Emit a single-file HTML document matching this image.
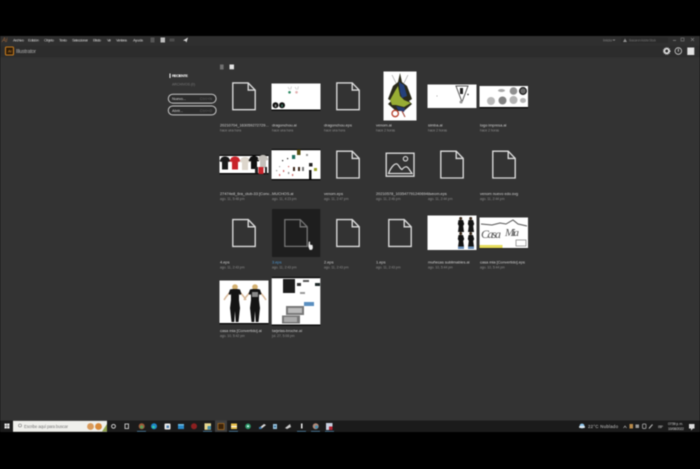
<!DOCTYPE html>
<html lang="es"><head><meta charset="utf-8"><title>Illustrator</title>
<style>
html,body{margin:0;padding:0;background:#000;width:700px;height:469px;overflow:hidden}
svg{display:block;filter:blur(.45px)}
text{font-family:"Liberation Sans",sans-serif}
.m{font-size:4px;fill:#d0d0d0}
.l{font-size:3.9px;fill:#d6d6d6}
.s{font-size:3.3px;fill:#909090}
.d{fill:none;stroke:#dcdcdc;stroke-width:1.35}
</style></head><body>
<svg width="700" height="469" viewBox="0 0 700 469" xmlns="http://www.w3.org/2000/svg">
<defs>
<g id="doc"><path class="d" d="M-11.2-13.4H4.2L11.2-6.2V13.4H-11.2Z"/><path class="d" d="M4.2-13.4V-6.2H11.2"/></g>
<g id="doch"><path fill="none" stroke="#757575" stroke-width="1.3" d="M-11.2-13.4H4.2L11.2-6.2V13.4H-11.2Z"/><path fill="none" stroke="#757575" stroke-width="1.3" d="M4.2-13.4V-6.2H11.2"/></g>
<g id="shirt"><path d="M-3.5-6L-1.2-7H1.2L3.5-6L5.5-2.5L3.5-1.300L3-2.500V6H-3V-2.500L-3.500-1.300L-5.500-2.500Z"/></g>
<g id="w"><path d="M-4-8L-9-2L-11 1M4-8L9-2L11 1" fill="none" stroke="#d8b898" stroke-width="1.500"/><circle cx="0" cy="-12" r="2.800" fill="#d4b070"/><path d="M-5-9.500L-2.500-10H2.500L5-9.500L6.500-5L4.500-4L4-5.500V1L5 9L3.500 23H.7L0 12L-.7 23H-3.500L-5 9L-4 1V-5.500L-4.500-4L-6.500-5Z" fill="#141414"/></g>
</defs>

<rect width="700" height="469" fill="#000"/>
<rect y="36" width="700" height="385" fill="#333"/>
<rect y="36" width="700" height="10" fill="#2f2f2f"/>
<rect y="46" width="700" height="11.500" fill="#2c2c2c"/>

<!-- menu -->
<text x="2" y="42" font-size="6" fill="#a3683a" font-style="italic">Ai</text>
<text class="m" x="13" y="41.500" textLength="11">Archivo</text>
<text class="m" x="28" y="41.500" textLength="11">Edición</text>
<text class="m" x="44" y="41.500" textLength="10">Objeto</text>
<text class="m" x="59" y="41.500" textLength="8">Texto</text>
<text class="m" x="72" y="41.500" textLength="16">Seleccionar</text>
<text class="m" x="93" y="41.500" textLength="8">Efecto</text>
<text class="m" x="107" y="41.500" textLength="4">Ver</text>
<text class="m" x="116" y="41.500" textLength="11">Ventana</text>
<text class="m" x="133" y="41.500" textLength="10">Ayuda</text>
<rect x="150.500" y="37.500" width="4" height="5" fill="#555"/>
<rect x="160.500" y="37.500" width="4.500" height="5" fill="#bdbdbd"/>
<rect x="169.500" y="38.500" width="5" height="3" fill="#4c4c4c"/>
<path d="M183 40.500L188 37.500L186.500 42.500L185.500 41Z" fill="#d8d8d8"/>
<text x="603" y="41.500" font-size="3.800" fill="#8d8d8d" textLength="9">Inicio</text>
<path d="M612.500 39.500l1.500 1.500 1.500-1.500z" fill="#888"/>
<rect x="621" y="37.500" width="47" height="5.500" fill="#2a2a2a"/>
<path d="M623 42l2-3.500 2 3.500z" fill="#909090"/>
<text x="629" y="41.500" font-size="3.200" fill="#6f6f6f" textLength="27">Buscar en Adobe Stock</text>
<rect x="673" y="40" width="3" height=".8" fill="#808080"/>
<rect x="681" y="38" width="3" height="3" fill="none" stroke="#808080" stroke-width=".6"/>
<path d="M691 38l3 3m0-3l-3 3" stroke="#808080" stroke-width=".6"/>

<!-- title row -->
<rect x="5.500" y="47" width="8" height="8" rx="1" fill="#2e1c08" stroke="#c47a1e" stroke-width="1.100"/>
<text x="8" y="52.500" font-size="4" fill="#d58a2c">Ai</text>
<text x="16" y="53" font-size="5.200" fill="#b0b0b0" textLength="20">Illustrator</text>
<circle cx="666.700" cy="51" r="2.200" fill="none" stroke="#e4e4e4" stroke-width="1.500"/>
<circle cx="666.700" cy="51" r="3.300" fill="none" stroke="#e4e4e4" stroke-width=".9" stroke-dasharray="1 .8"/>
<circle cx="678.300" cy="51" r="3.300" fill="none" stroke="#d0d0d0" stroke-width=".8"/>
<rect x="677.900" y="48.800" width=".9" height="3" fill="#d0d0d0"/>
<rect x="687.300" y="47.500" width="7" height="7.500" fill="#e2e2e2"/>

<!-- sidebar -->
<rect x="169.500" y="73.500" width="1" height="4.500" fill="#fff"/>
<text x="172" y="77" font-size="3.700" font-weight="bold" fill="#fff" textLength="16">RECIENTE</text>
<text x="172" y="85.500" font-size="3.500" fill="#7a7a7a" textLength="23">ARCHIVOS (0)</text>
<rect x="168.300" y="94.200" width="47.800" height="8.900" rx="4.400" fill="#2c2c2c" stroke="#c8c8c8" stroke-width="1"/>
<rect x="168.300" y="106" width="47.800" height="8.900" rx="4.400" fill="#2c2c2c" stroke="#c8c8c8" stroke-width="1"/>
<text x="172" y="100" font-size="3.900" fill="#d8d8d8" textLength="14">Nuevo...</text>
<text x="172" y="111.800" font-size="3.900" fill="#d8d8d8" textLength="11">Abrir...</text>
<text x="200" y="100" font-size="3.400" fill="#6a6a6a" textLength="12">Ctrl+N</text>
<text x="200" y="111.800" font-size="3.400" fill="#6a6a6a" textLength="12">Ctrl+O</text>

<!-- view toggles -->
<rect x="220" y="64.500" width="3.600" height="5" fill="#717171"/>
<rect x="229.500" y="64.500" width="4.500" height="4.800" fill="#e4e4e4"/>

<!-- row 1 -->
<use href="#doc" x="244" y="96.300"/>
<rect x="271.500" y="83.500" width="49" height="26.500" fill="#fff"/>
<rect x="271.500" y="109.500" width="49" height="1.200" fill="#000"/>
<circle cx="275.500" cy="105.300" r="3" fill="#111"/><circle cx="282" cy="105.300" r="3" fill="#111"/>
<rect x="274.800" y="104.500" width="1.500" height="2.500" fill="#888"/><rect x="281.300" y="104.500" width="1.500" height="2.500" fill="#3e7d68"/>
<circle cx="289.500" cy="92.300" r="1.300" fill="#2d8a63"/><circle cx="296.500" cy="92.300" r="1.300" fill="#e3b0b0"/>
<path d="M288 87l1.500 2.500M291.500 86.500l-1 3M295 87l1.500 2.500M298.500 86.500l-1 3" stroke="#bbb" stroke-width=".6"/>
<use href="#doc" x="348" y="96.300"/>
<rect x="383.500" y="71.500" width="33" height="49" fill="#fff"/>
<path d="M400 73L398 82L393 86L388 99L391 101L388 104L396 111H404L412 104L409 101L412 99L407 86L402 82Z" fill="#2a2a1a"/>
<path d="M390 100L395 91L398 86L400 96L404 100L411 103L404 107L396 105L392 105Z" fill="#98ad34"/>
<path d="M399 82L404 85L407 96L402 98L400 92Z" fill="#24407a"/>
<path d="M396 106L405 108L404 112L398 110Z" fill="#263a70"/>
<path d="M392 113.500a3.200 3.200 0 1 0 6.400 0a3.200 3.200 0 1 0-6.400 0" fill="none" stroke="#b6402c" stroke-width="1.300"/>
<path d="M402 111l3 6" stroke="#9c3a2c" stroke-width="1"/>
<path d="M392 75L396 83M408 75L404 83" stroke="#777" stroke-width=".5"/>
<rect x="427.500" y="84.500" width="49" height="23.500" fill="#fff"/>
<path d="M456 86H468L462 102Z" fill="none" stroke="#555" stroke-width="1"/>
<rect x="460" y="88" width="3" height="6" fill="#222"/>
<circle cx="461" cy="102" r="1.500" fill="#999"/><circle cx="468" cy="94.500" r=".7" fill="#222"/><circle cx="437" cy="96" r=".5" fill="#888"/>
<rect x="479.500" y="86" width="48.500" height="21.500" fill="#fff"/>
<rect x="479.500" y="107" width="48.500" height="1.200" fill="#000"/>
<circle cx="491" cy="101" r="4" fill="#b8b8b8"/><circle cx="502.500" cy="100.500" r="4" fill="#808080"/><circle cx="513.500" cy="100" r="4" fill="#b4b4b4"/>
<circle cx="513.500" cy="91" r="3.800" fill="#909090"/><circle cx="523" cy="91" r="3.400" fill="#666" stroke="#111" stroke-width="1.100"/><ellipse cx="523" cy="100.500" rx="3" ry="2.500" fill="#b4b4b4"/>
<ellipse cx="501.500" cy="90.500" rx="3.500" ry="1.500" fill="#a8a8a8"/>
<g>
<text class="l" x="220" y="126.500">20210704_163059272729...</text><text class="s" x="220" y="131.500">hace una hora</text>
<text class="l" x="272" y="126.500">dragonchou.ai</text><text class="s" x="272" y="131.500">hace una hora</text>
<text class="l" x="324" y="126.500">dragonchou.eps</text><text class="s" x="324" y="131.500">hace una hora</text>
<text class="l" x="376" y="126.500">venom.ai</text><text class="s" x="376" y="131.500">hace 2 horas</text>
<text class="l" x="428" y="126.500">simba.ai</text><text class="s" x="428" y="131.500">hace 2 horas</text>
<text class="l" x="480" y="126.500">logo impresa.ai</text><text class="s" x="480" y="131.500">hace 2 horas</text>
</g>

<!-- row 2 -->
<rect x="219.500" y="155.500" width="49" height="17.500" fill="#fff"/>
<rect x="219.500" y="155" width="49" height="1" fill="#000"/><rect x="219.500" y="173" width="49" height="1.200" fill="#000"/>
<use href="#shirt" x="225" y="163.500" fill="#1a1a1a"/><use href="#shirt" x="235" y="163.500" fill="#c8232a"/><use href="#shirt" x="245" y="164" fill="#ddd6cc"/><use href="#shirt" x="254" y="163" fill="#111"/><use href="#shirt" x="263" y="162" fill="#c4c0ba"/>
<rect x="255" y="167" width="3" height="6.500" fill="#222"/><rect x="258.500" y="167" width="5" height="7" fill="#c8232a"/><rect x="265" y="167" width="2" height="7" fill="#222"/>
<rect x="271.500" y="149.500" width="49" height="30" fill="#fff"/>
<rect x="271.500" y="149" width="49" height="1.200" fill="#000"/><rect x="271.500" y="179" width="49" height="1.200" fill="#000"/>
<rect x="297" y="149.500" width="3.500" height="5.500" fill="#554c10"/><rect x="292" y="155" width="3.200" height="4" fill="#1d6e5e"/>
<rect x="309" y="170" width="2.500" height="9" fill="#111"/><rect x="309" y="163" width="3.500" height="3.500" fill="#222"/>
<rect x="293" y="167" width="2" height="4" fill="#3a2418"/><rect x="298" y="167" width="2" height="4" fill="#3a2418"/><rect x="302" y="167" width="2" height="4" fill="#777"/>
<rect x="314" y="168" width="3" height="3" fill="#9aa02a"/>
<rect x="282" y="160" width="1.200" height="1.200" fill="#222"/><rect x="287" y="158" width="1.200" height="1.200" fill="#222"/><rect x="283" y="170" width="1.200" height="2" fill="#c66"/><rect x="279" y="174" width="1.200" height="2" fill="#c66"/><rect x="288" y="172" width="1.200" height="2" fill="#888"/><rect x="292" y="174" width="1.200" height="2" fill="#c66"/><rect x="276" y="170" width="1.200" height="1.200" fill="#999"/><rect x="288" y="166" width="1.200" height="1.200" fill="#c66"/><rect x="306" y="154" width="2" height="2" fill="#999"/><rect x="279" y="166" width="1.200" height="1.200" fill="#aaa"/>
<use href="#doc" x="348" y="164.600"/>
<rect x="386.200" y="153.200" width="27.800" height="23" fill="none" stroke="#dcdcdc" stroke-width="1.350"/>
<circle cx="405.500" cy="158.800" r="2.200" fill="none" stroke="#dcdcdc" stroke-width="1.100"/>
<path d="M388.500 173.500C390 169 394 163 397 164C399 165 400 169 402 169.500C405 166 407 166 409 169L412 173.500Z" fill="none" stroke="#dcdcdc" stroke-width="1.250"/>
<use href="#doc" x="452" y="164.600"/>
<use href="#doc" x="504" y="164.600"/>
<g>
<text class="l" x="220" y="195">27474e8_6ra_club-33 [Conv...</text><text class="s" x="220" y="200">ago. 11, 5:48 pm</text>
<text class="l" x="272" y="195">MUCHOS.ai</text><text class="s" x="272" y="200">ago. 11, 4:23 pm</text>
<text class="l" x="324" y="195">venom.eps</text><text class="s" x="324" y="200">ago. 11, 2:47 pm</text>
<text class="l" x="376" y="195">20210578_103547791240694...</text><text class="s" x="376" y="200">ago. 11, 2:46 pm</text>
<text class="l" x="428" y="195">tiveom.eps</text><text class="s" x="428" y="200">ago. 11, 2:44 pm</text>
<text class="l" x="480" y="195">venom nuevo edo.svg</text><text class="s" x="480" y="200">ago. 11, 2:44 pm</text>
</g>

<!-- row 3 -->
<use href="#doc" x="244" y="233"/>
<rect x="272" y="209" width="48.300" height="48" fill="#1e1e1e"/>
<use href="#doch" x="296" y="233"/>
<path d="M308.700 241.500h1.500v3l2.500.5.300 3-1 2h-2.500l-1.300-3.500z" fill="#ececec" stroke="#222" stroke-width=".3"/>
<use href="#doc" x="348" y="233"/>
<use href="#doc" x="400" y="233"/>
<rect x="427.500" y="215.500" width="49" height="34.500" fill="#fff"/>
<g fill="#141414">
<path d="M458.500 220h4.500l1.200 4-1 2 .8 6h-6l.8-6-1-2z"/><path d="M468.500 220h4.500l1.200 4-1 2 .8 6h-6l.8-6-1-2z"/>
<path d="M458.500 235h4.500l1.200 4-1 2 .8 6h-6l.8-6-1-2z"/><path d="M468.500 235h4.500l1.200 4-1 2 .8 6h-6l.8-6-1-2z"/>
</g>
<circle cx="460.700" cy="218.500" r="1.500" fill="#3a2a1a"/><circle cx="470.700" cy="218.500" r="1.500" fill="#3a2a1a"/><circle cx="460.700" cy="233.500" r="1.500" fill="#3a2a1a"/><circle cx="470.700" cy="233.500" r="1.500" fill="#3a2a1a"/>
<rect x="458" y="246.500" width="6" height="2.500" fill="#6a8fb8"/><rect x="468" y="246.500" width="6" height="2.500" fill="#6a8fb8"/>
<rect x="479.500" y="217.500" width="48.500" height="30.500" fill="#fff"/>
<rect x="479.500" y="248" width="48.500" height="1" fill="#222"/>
<path d="M481 224L492 225L500 223L506 224L513 220L518 224L527 226" fill="none" stroke="#555" stroke-width="1"/>
<text x="481" y="238" font-style="italic" font-size="12" fill="#555" textLength="20" style="font-family:'Liberation Serif',serif">Casa</text>
<text x="505" y="236" font-size="11" font-style="italic" fill="#555" textLength="14" style="font-family:'Liberation Serif',serif">Mia</text>
<rect x="479.500" y="245" width="23" height="3" fill="#e6dc5a"/>
<rect x="516" y="240" width="10" height="6" fill="#fff" stroke="#666" stroke-width=".6"/>
<g>
<text class="l" x="220" y="263.500">4.eps</text><text class="s" x="220" y="268.500">ago. 11, 2:43 pm</text>
<text class="l" x="272" y="263.500" style="fill:#4d9ad8">3.eps</text><text class="s" x="272" y="268.500">ago. 11, 2:43 pm</text>
<text class="l" x="324" y="263.500">2.eps</text><text class="s" x="324" y="268.500">ago. 11, 2:43 pm</text>
<text class="l" x="376" y="263.500">1.eps</text><text class="s" x="376" y="268.500">ago. 11, 2:43 pm</text>
<text class="l" x="428" y="263.500">muñecas sublimables.ai</text><text class="s" x="428" y="268.500">ago. 10, 5:44 pm</text>
<text class="l" x="480" y="263.500">casa mia [Convertido].eps</text><text class="s" x="480" y="268.500">ago. 10, 5:44 pm</text>
</g>

<!-- row 4 -->
<rect x="219.500" y="280.500" width="49" height="42.500" fill="#fff"/>
<rect x="219.500" y="323" width="49" height="1.200" fill="#000"/>
<use href="#w" x="235" y="299"/><use href="#w" x="255" y="299"/>
<rect x="252" y="292" width="6" height="5" fill="#888"/>
<rect x="271.700" y="277.500" width="48.600" height="47" fill="#fff"/>
<rect x="271.700" y="277" width="48.600" height="1.200" fill="#000"/><rect x="271.700" y="324.500" width="48.600" height="1.200" fill="#000"/>
<rect x="283" y="279" width="12" height="14" fill="#1d1d1d"/>
<rect x="297" y="283" width="4" height="3" fill="#333"/><rect x="303" y="280" width="6" height="2" fill="#555"/><rect x="315" y="283" width="5" height="3" fill="#1f2a2a"/>
<rect x="300" y="292" width="5" height="2" fill="#999"/><rect x="304" y="302" width="10" height="4" fill="#5a8fc0"/>
<rect x="286" y="306" width="18" height="9" fill="#777"/><rect x="288" y="308" width="14" height="5" fill="#bbb"/>
<rect x="282" y="315.500" width="18" height="8" fill="#777"/><rect x="284" y="317" width="13" height="5" fill="#aaa"/>
<text class="l" x="220" y="332">casa mia [Convertido].ai</text><text class="s" x="220" y="337">ago. 10, 5:42 pm</text>
<text class="l" x="272" y="332">tarjetas-broche.ai</text><text class="s" x="272" y="337">jul. 27, 5:08 pm</text>

<!-- taskbar -->
<rect y="420.500" width="700" height="11.500" fill="#1b1b1b"/>
<g fill="#eee"><rect x="4.500" y="423.500" width="2.300" height="2.300"/><rect x="7.200" y="423.500" width="2.300" height="2.300"/><rect x="4.500" y="426.200" width="2.300" height="2.300"/><rect x="7.200" y="426.200" width="2.300" height="2.300"/></g>
<rect x="13" y="420.800" width="94" height="11" fill="#f0f0ec"/>
<circle cx="20" cy="425.500" r="1.500" fill="none" stroke="#777" stroke-width=".6"/>
<text x="24" y="428" font-size="4.300" fill="#777" textLength="44">Escribe aquí para buscar</text>
<circle cx="90.500" cy="426.500" r="3.400" fill="#d99a5a"/><circle cx="98.500" cy="426.500" r="3.400" fill="#d98a3a"/><path d="M102 431.500L107 424V431.500Z" fill="#8fa24a"/>
<circle cx="113.500" cy="426.300" r="1.900" fill="none" stroke="#ddd" stroke-width=".9"/>
<rect x="125" y="424" width="3.500" height="4.500" fill="none" stroke="#ccc" stroke-width=".9"/>
<circle cx="141.700" cy="426.300" r="3" fill="#a05a3a"/><circle cx="141.700" cy="427" r="1.600" fill="#5aa05a"/>
<circle cx="154" cy="426.300" r="3" fill="#1f86c9"/><circle cx="153.500" cy="427" r="1.300" fill="#36d0a0"/>
<rect x="164.500" y="423.500" width="6" height="6" rx="1" fill="#e8e8e8"/><rect x="166.500" y="425.500" width="2.500" height="2.500" fill="#4a7fb0"/>
<rect x="178" y="424" width="6" height="5" fill="#2a8ac8"/><rect x="178" y="424" width="6" height="1.500" fill="#6bb8e0"/>
<circle cx="194" cy="426.300" r="3" fill="#8c2020"/>
<rect x="204.500" y="423.300" width="6.500" height="6.500" fill="#e8d890"/><rect x="207.500" y="426" width="3.500" height="3.500" fill="#4a90a8"/>
<rect x="215" y="420.500" width="12" height="11.500" fill="#3f3f3f"/>
<rect x="218" y="423.500" width="6" height="6" fill="#3a2208" stroke="#c47a1e" stroke-width=".6"/>
<rect x="231" y="423.500" width="6" height="5.500" fill="#e8c04a"/><rect x="231" y="426" width="6" height="1" fill="#fff"/>
<circle cx="248" cy="426.300" r="2.800" fill="#2f9a6a"/><circle cx="248" cy="426.300" r="1" fill="#dff"/>
<path d="M259 428l5-4 2 1-5 4z" fill="#ddd"/><rect x="259" y="427" width="2.500" height="2" fill="#3a7ab0"/>
<path d="M273 424h4v5h-4z" fill="#9cc4dc"/><circle cx="275" cy="426.500" r="1" fill="#2a6a9a"/>
<path d="M285 428l5-4 1 3-4 2z" fill="#ccc"/>
<rect x="301" y="423.500" width="1.500" height="5" fill="#eee"/>
<circle cx="315.700" cy="426.300" r="3" fill="#b08a7a"/><circle cx="316.500" cy="427" r="1.600" fill="#4a90b0"/>
<rect x="326" y="423" width="6.500" height="7" fill="#c8d0e0"/><rect x="329" y="426.500" width="3.500" height="3.500" fill="#b02030"/>
<g fill="#5aa0d0"><rect x="137" y="431" width="9" height=".6"/><rect x="203" y="431" width="9" height=".6"/><rect x="229" y="431" width="9" height=".6"/><rect x="297" y="431" width="9" height=".6"/><rect x="311" y="431" width="9" height=".6"/><rect x="325" y="431" width="9" height=".6"/></g>
<!-- tray -->
<circle cx="582" cy="426" r="2.400" fill="#8fc4e8"/><rect x="579" y="426" width="6" height="2" rx="1" fill="#dfeaf2"/>
<text x="588" y="428" font-size="4.300" fill="#cfcfcf" textLength="30">22°C  Nublado</text>
<path d="M623.500 428l1.500-2 1.500 2" fill="none" stroke="#ccc" stroke-width=".6"/>
<rect x="629.500" y="424" width="3.500" height="4.500" fill="#b88a4a"/>
<rect x="635.500" y="424.500" width="3.500" height="3.500" fill="#9a9a9a"/>
<rect x="642.500" y="424" width="3.500" height="4.500" rx="1" fill="none" stroke="#bbb" stroke-width=".7"/>
<path d="M649 428.500l3.500-4" stroke="#bbb" stroke-width="1"/>
<text x="658" y="428" font-size="3.800" fill="#b8b8b8" textLength="5">ESP</text>
<text x="668" y="425" font-size="3.500" fill="#d0d0d0" textLength="15">07:59 p. m.</text>
<text x="668" y="430" font-size="3.500" fill="#d0d0d0" textLength="16">10/08/2022</text>
<rect x="689" y="424" width="5.500" height="4.500" fill="#dcdcdc"/><path d="M691 428.500v2l2-2z" fill="#dcdcdc"/>
</svg>
</body></html>
